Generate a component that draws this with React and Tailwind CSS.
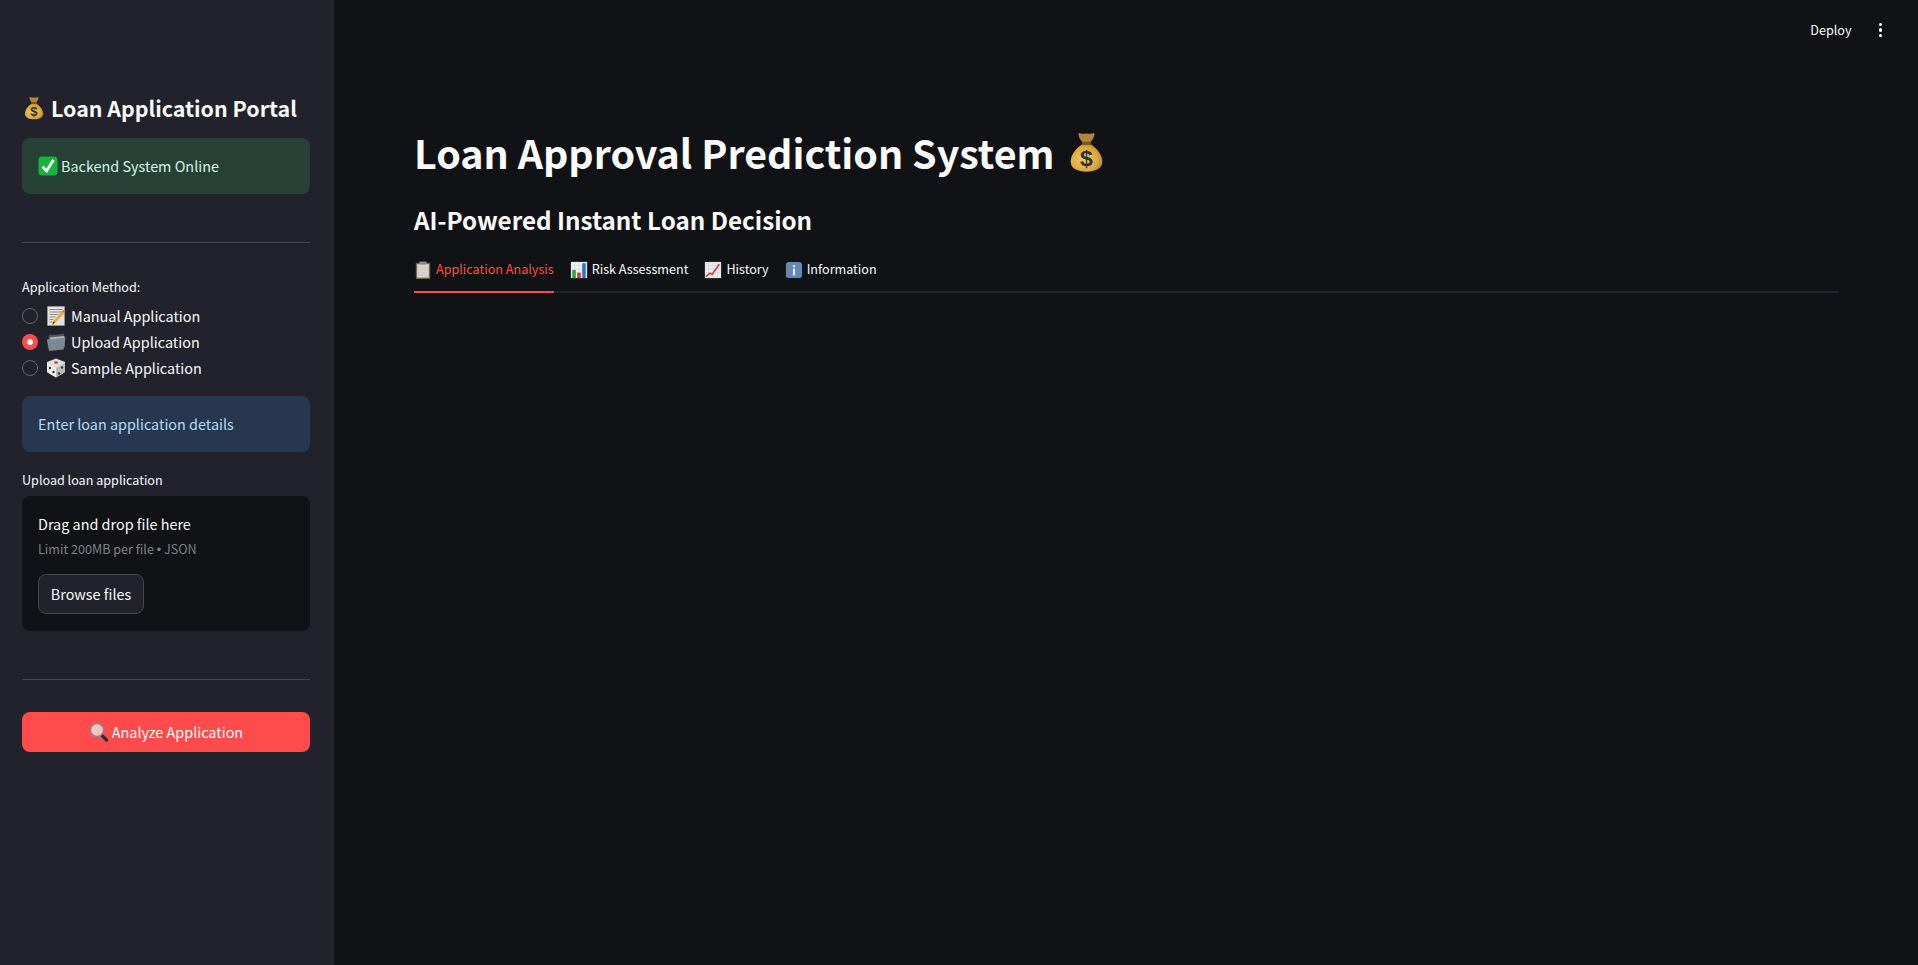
const sans = "font-['Noto_Sans_CJK_SC','Noto_Sans',sans-serif]"

function MoneyBag({ className, id }) {
  return (
    <svg viewBox="0 0 32 38" className={className}>
      <defs>
        <radialGradient id={id} cx="0.420" cy="0.550" r="0.650">
          <stop offset="0" stopColor="#f2cd63" />
          <stop offset="0.700" stopColor="#d9a63c" />
          <stop offset="1" stopColor="#a87a2a" />
        </radialGradient>
      </defs>
      <path d="M9 1.500c2.500 1.300 4.500.5 7 .5s4.500.8 7-.5c1 3-1.500 6.500-3.500 9h-7c-2-2.500-4.500-6-3.500-9z" fill="#b2843a" />
      <path d="M12 12C6 16 1.500 22 1.500 28c0 6.500 6.500 9 14.500 9s14.500-2.500 14.500-9c0-6-4.500-12-10.500-16z" fill={`url(#${id})`} />
      <path d="M12 9.500h8v3h-8z" fill="#7a5823" />
      <text x="16" y="32" textAnchor="middle" fontSize="21" fontWeight="700" fill="#2f3036" fontFamily="Liberation Sans">$</text>
    </svg>
  )
}

function CheckBox({ className }) {
  return (
    <svg viewBox="0 0 20 20" className={className}>
      <rect x="0.500" y="0.500" width="19" height="19" rx="3.500" fill="#13b53c" />
      <path d="M4.500 10.500l4 4.500 7-11" fill="none" stroke="#fff" strokeWidth="2.800" />
    </svg>
  )
}

function Memo({ className }) {
  return (
    <svg viewBox="0 0 20 20" className={className}>
      <path d="M1.500 .5h17v19h-17z" fill="#e6e4de" stroke="#a5a39c" strokeWidth="0.500" />
      <path d="M3.500 3.500h13M3.500 6h13M3.500 8.500h9M3.500 11h6M3.500 13.500h4M3.500 16h3" stroke="#77757a" strokeWidth="0.800" />
      <path d="M18.500 7l-9 9.500-3 2.500.5-3.500 9-10z" fill="#eda92f" />
      <path d="M16 5.500l2.500 1.500 1-1.500-2-1.500z" fill="#d9636b" />
      <path d="M6.500 19l.5-3.500 2 1z" fill="#553e2a" />
    </svg>
  )
}

function Folder({ className }) {
  return (
    <svg viewBox="0 0 20 20" className={className}>
      <path d="M2.500 5l1-2 5-.5 1 .5 8.500-1.500v13H3z" fill="#4f565e" />
      <path d="M4 5.500l14.500-1.500v11L4 17z" fill="#b4bcc2" />
      <path d="M.8 7.500l15.700-1.500 3-.5-2 12-14.500 1.500z" fill="#7d8992" />
    </svg>
  )
}

function Die({ className }) {
  return (
    <svg viewBox="0 0 20 20" className={className}>
      <path d="M10 .500l9 3.500v10l-9 5.500-9-5.500V4z" fill="#dedcd6" />
      <path d="M1 5l9 5v9.500l-9-5.500z" fill="#f0eee9" />
      <path d="M19 5l-9 5v9.500l9-5.500z" fill="#bdbab3" />
      <ellipse cx="10" cy="4.500" rx="1.800" ry="1.200" fill="#d8353a" />
      <circle cx="4" cy="10" r="1.200" fill="#333" />
      <circle cx="7.500" cy="14" r="1.200" fill="#333" />
      <circle cx="13" cy="15.500" r="1.200" fill="#333" />
      <circle cx="16" cy="9.500" r="1.200" fill="#333" />
    </svg>
  )
}

function Magnifier({ className }) {
  return (
    <svg viewBox="0 0 20 20" className={className}>
      <path d="M12 12.500l5.500 5.500" stroke="#2e2e30" strokeWidth="3.200" strokeLinecap="round" />
      <circle cx="8" cy="8" r="6.500" fill="#f6c4c2" stroke="#8b8b8d" strokeWidth="1.500" />
    </svg>
  )
}

function Clipboard({ className }) {
  return (
    <svg viewBox="0 0 20 20" className={className}>
      <rect x="2" y="2" width="16" height="18" rx="1" fill="#7d5f44" />
      <rect x="3.500" y="3.500" width="13" height="15" fill="#d8d6cf" />
      <path d="M5 7h10M5 10h10M5 13h10M5 16h10" stroke="#c8c6bf" strokeWidth="0.800" />
      <rect x="6" y="0.500" width="8" height="3.500" rx="1" fill="#8d8c88" />
    </svg>
  )
}

function BarChart({ className }) {
  return (
    <svg viewBox="0 0 20 20" className={className}>
      <rect x="1" y="1" width="18" height="18" fill="#f1f3f5" />
      <path d="M1 5h18M1 9h18M1 13h18M5 1v18M10 1v18M15 1v18" stroke="#c7ccd2" strokeWidth="0.500" />
      <rect x="2.500" y="10" width="4" height="9" fill="#2aa63f" />
      <rect x="8" y="13" width="4" height="6" fill="#d33a3a" />
      <rect x="13.500" y="2.500" width="4" height="16.500" fill="#2f74c9" />
    </svg>
  )
}

function TrendUp({ className }) {
  return (
    <svg viewBox="0 0 20 20" className={className}>
      <rect x="1" y="1" width="18" height="18" fill="#e9ecef" />
      <path d="M1 5h18M1 9h18M1 13h18M5 1v18M10 1v18M15 1v18" stroke="#c7ccd2" strokeWidth="0.500" />
      <path d="M2 17.500l4.500-4 2.500 1.500 8-11.500" fill="none" stroke="#df3336" strokeWidth="1.800" />
    </svg>
  )
}

function InfoTile({ className }) {
  return (
    <svg viewBox="0 0 20 20" className={className}>
      <rect x="1" y="1" width="18" height="18" rx="3.500" fill="#6289b4" />
      <rect x="8.800" y="8.500" width="2.400" height="7.500" fill="#e8eef5" />
      <rect x="8.800" y="4.500" width="2.400" height="2.500" fill="#e8eef5" />
    </svg>
  )
}

function Radio({ checked }) {
  if (checked) {
    return (
      <span className="flex h-4 w-4 items-center justify-center rounded-full bg-[#ff4b4b]">
        <span className="h-1.5 w-1.5 rounded-full bg-white"></span>
      </span>
    )
  }
  return <span className="h-4 w-4 rounded-full border border-[#66676d]"></span>
}

function MethodOption({ icon: Icon, label, checked, rowClass }) {
  return (
    <div className={`flex items-center ${rowClass}`}>
      <Radio checked={checked} />
      <Icon className="ml-[8px] h-5 w-5 shrink-0" />
      <span className="ml-[5px] text-[14.400px] text-[#fafafa]">{label}</span>
    </div>
  )
}

function MainTab({ icon: Icon, label, active }) {
  return (
    <div className={`flex h-[39px] items-center gap-[4px] border-b-2 pb-[6px] ${active ? "border-[#ff4b4b] text-[#ff4b4b]" : "border-transparent text-[#fafafa]"}`}>
      <Icon className="h-[18px] w-[18px] shrink-0" />
      <span className="text-[12.600px]">{label}</span>
    </div>
  )
}

export default function App() {
  return (
    <div className={`flex h-[965px] overflow-hidden bg-[#111216] ${sans}`}>
      {/* Sidebar */}
      <aside className="flex w-[334px] shrink-0 flex-col bg-[#21222b] pt-[90px] pr-[24px] pl-[22px] text-[#fafafa]">
        <h2 className="flex h-[36px] items-center gap-[7px] text-[21.400px] font-bold whitespace-nowrap">
          <MoneyBag id="bag-small" className="ml-[2px] h-[24px] w-[20px] shrink-0" />
          Loan Application Portal
        </h2>

        <div className="mt-[12px] flex h-[56px] items-center gap-[3px] rounded-lg bg-[#274137] px-[16px] text-[14.400px] text-[#d3f5e0]">
          <CheckBox className="h-5 w-5 shrink-0" />
          Backend System Online
        </div>

        <hr className="mt-[48px] border-[#45464c]" />

        <p className="mt-[35px] text-[12.600px] leading-[18px]">Application Method:</p>
        <div className="mt-[7px]">
          <MethodOption icon={Memo} label="Manual Application" rowClass="h-[26px]" />
          <MethodOption icon={Folder} label="Upload Application" checked rowClass="h-[26px]" />
          <MethodOption icon={Die} label="Sample Application" rowClass="h-[25px]" />
        </div>

        <div className="mt-[16px] flex h-[56px] items-center rounded-lg bg-[#273750] px-[16px] text-[14.400px] text-[#b5dcf7]">
          Enter loan application details
        </div>

        <p className="mt-[19px] text-[12.600px] leading-[18px]">Upload loan application</p>
        <div className="mt-[7px] h-[135px] rounded-lg bg-[#111216] px-[16px] pt-[16px]">
          <p className="text-[14.400px] leading-[24px]">Drag and drop file here</p>
          <p className="mt-[3px] text-[12.600px] leading-[20px] text-[#7e8086]">
            Limit 200MB per file <span className="font-['Liberation_Sans',sans-serif]">•</span> JSON
          </p>
          <button className="mt-[14px] h-[40px] w-[106px] rounded-lg border border-[#44454d] bg-[#21222b] text-[14.400px]">
            Browse files
          </button>
        </div>

        <hr className="mt-[48px] border-[#45464c]" />

        <button className="mt-[32px] flex h-[40px] items-center justify-center gap-[3px] rounded-lg bg-[#ff4b4b] text-[14.400px] text-white">
          <Magnifier className="h-5 w-5 shrink-0" />
          Analyze Application
        </button>
      </aside>

      {/* Main */}
      <main className="flex min-w-0 flex-1 flex-col text-[#fafafa]">
        <header className="flex h-[60px] shrink-0 items-center justify-end">
          <span className="text-[12.600px]">Deploy</span>
          <span className="mr-[36px] ml-[27px] flex flex-col gap-[2px]">
            <span className="h-[3.500px] w-[3.500px] rounded-full bg-white"></span>
            <span className="h-[3.500px] w-[3.500px] rounded-full bg-white"></span>
            <span className="h-[3.500px] w-[3.500px] rounded-full bg-white"></span>
          </span>
        </header>

        <div className="px-[80px] pt-[62px]">
          <h1 className="flex h-[60px] items-center gap-[14px] text-[39.400px] font-bold whitespace-nowrap">
            Loan Approval Prediction System
            <MoneyBag id="bag-large" className="h-[42px] w-[35px] shrink-0" />
          </h1>
          <h2 className="mt-[17px] text-[24.200px] leading-[42px] font-semibold">AI-Powered Instant Loan Decision</h2>

          <div className="mt-[13px] flex border-b-2 border-[#22232b]">
            <div className="-mb-[2px] flex gap-[16px]">
              <MainTab icon={Clipboard} label="Application Analysis" active />
              <MainTab icon={BarChart} label="Risk Assessment" />
              <MainTab icon={TrendUp} label="History" />
              <MainTab icon={InfoTile} label="Information" />
            </div>
          </div>
        </div>
      </main>
    </div>
  )
}
